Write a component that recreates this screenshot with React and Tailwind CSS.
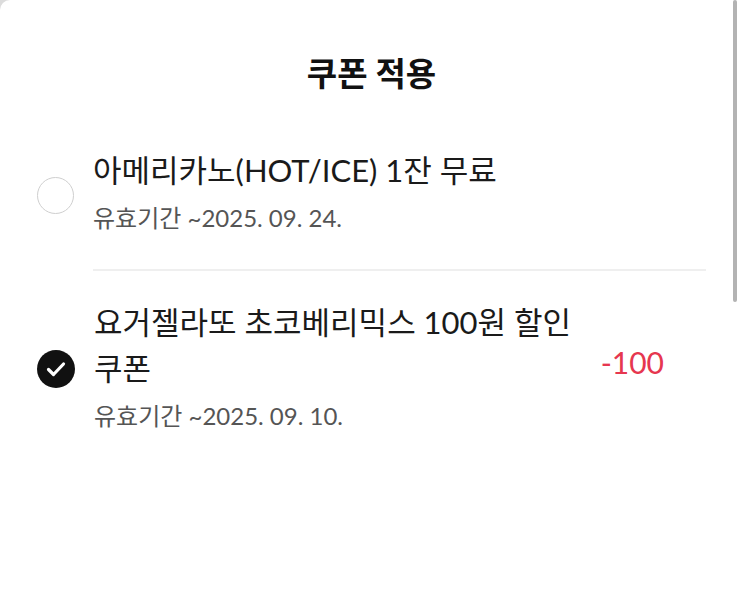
import React, { useState } from "react";

const coupons = [
  {
    id: 1,
    name: "아메리카노(HOT/ICE) 1잔 무료",
    expires: "유효기간 ~2025. 09. 24.",
    discount: null,
  },
  {
    id: 2,
    name: "요거젤라또 초코베리믹스 100원 할인 쿠폰",
    expires: "유효기간 ~2025. 09. 10.",
    discount: "-100",
  },
];

function CheckMark({ checked }) {
  if (!checked) {
    return (
      <span className="w-[37px] h-[37px] shrink-0 rounded-full border-[1.5px] border-[#cfcfcf] bg-white" />
    );
  }
  return (
    <span className="w-[38px] h-[38px] shrink-0 rounded-full bg-[#111] flex items-center justify-center">
      <svg width="24" height="24" viewBox="0 0 24 24" fill="none">
        <path
          d="M4.5 12.5l5 5 10-10.5"
          stroke="white"
          strokeWidth="3.2"
          strokeLinecap="round"
          strokeLinejoin="round"
        />
      </svg>
    </span>
  );
}

export default function App() {
  const [selected, setSelected] = useState(2);

  return (
    <div
      className="relative w-[743px] h-[603px] bg-[#dcdcdc] overflow-hidden"
      style={{ fontFamily: "Lato, 'Noto Sans CJK KR', sans-serif" }}
    >
      <div className="h-full bg-white rounded-tl-[10px]">
        {/* Header */}
        <div className="pt-[55px] pb-[28px] text-center">
          <h1 className="text-[33px] leading-[36px] font-bold text-[#111]">
            쿠폰 적용
          </h1>
        </div>

        {/* Coupon list */}
        <ul>
          {coupons.map((c, i) => (
            <li
              key={c.id}
              onClick={() => setSelected(c.id)}
              className="flex items-center pl-[37px] pr-[37px] cursor-pointer"
            >
              <CheckMark checked={selected === c.id} />
              <div
                className={`ml-[19px] flex-1 flex items-center pt-[28px] pb-[36px] ${
                  i < coupons.length - 1 ? "border-b-2 border-[#efefef]" : ""
                }`}
              >
                <div className="flex-1">
                  <p className="max-w-[500px] text-[31px] leading-[46px] text-[#1a1a1a]">
                    {c.name}
                  </p>
                  <p className="mt-[10px] text-[24px] leading-[30px] text-[#555]">
                    {c.expires}
                  </p>
                </div>
                {c.discount && (
                  <span className="mr-[42px] mb-[6px] text-[30px] text-[#e6374f]">
                    {c.discount}
                  </span>
                )}
              </div>
            </li>
          ))}
        </ul>
      </div>

      {/* scrollbar */}
      <div className="absolute right-[6px] top-0 w-[4px] h-[302px] rounded-full bg-[#b3b3b3]" />
    </div>
  );
}
